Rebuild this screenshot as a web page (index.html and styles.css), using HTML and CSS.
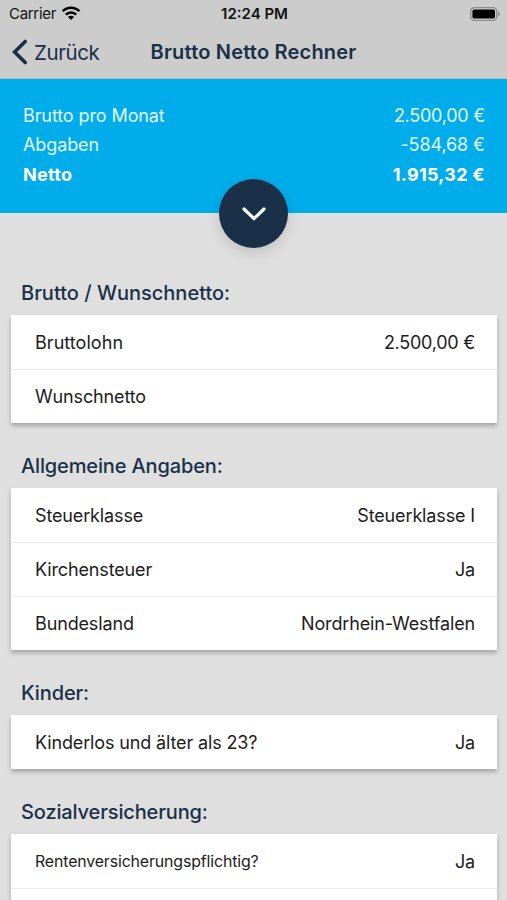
FILE: index.html
```
<!DOCTYPE html>
<html lang="de">
<head>
<meta charset="UTF-8">
<meta name="viewport" content="width=device-width, initial-scale=1">
<title>Brutto Netto Rechner</title>
<link rel="stylesheet" href="styles.css">
</head>
<body>
<header class="header">
  <div class="status">
    <div class="carrier">
      <span>Carrier</span>
      <svg class="wifi" width="20" height="14" viewBox="0 0 20 14" fill="none" stroke="#000" stroke-width="2.6">
        <path d="M1.6 5.2C6.3 .5 13.7 .5 18.4 5.2"/>
        <path d="M4.8 8.7C7.7 5.8 12.3 5.8 15.2 8.7"/>
        <path d="M6.9 10.9C8.6 9.3 11.4 9.3 13.1 10.9L10 14z" fill="#000" stroke="none"/>
      </svg>
    </div>
    <span class="time">12:24 PM</span>
    <svg class="battery" width="30" height="14" viewBox="0 0 30 14">
      <rect x=".7" y=".7" width="26" height="12.6" rx="3.6" fill="none" stroke="#8d8d8d" stroke-width="1.3"/>
      <rect x="2.4" y="2.4" width="22.6" height="9.2" rx="1.8" fill="#000"/>
      <path d="M28 4.6c2.2.8 2.2 4 0 4.8z" fill="#8d8d8d"/>
    </svg>
  </div>
  <nav class="nav">
    <a class="back">
      <svg width="16" height="26" viewBox="0 0 16 26" fill="none" stroke="#1a3049" stroke-width="3.6" stroke-linecap="round"><path d="M13.2 2.4L2.6 13L13.2 23.6"/></svg>
      <span>Zurück</span>
    </a>
    <h1 class="title">Brutto Netto Rechner</h1>
  </nav>
</header>

<section class="summary">
  <div class="line"><span>Brutto pro Monat</span><span class="value">2.500,00 €</span></div>
  <div class="line"><span>Abgaben</span><span>-584,68 €</span></div>
  <div class="line netto"><span>Netto</span><span>1.915,32 €</span></div>
  <button class="toggle" aria-label="Details">
    <svg width="26" height="16" viewBox="0 0 26 16" fill="none" stroke="#fff" stroke-width="3.2" stroke-linecap="round" stroke-linejoin="round"><path d="M3 3L13 12.7L23 3"/></svg>
  </button>
</section>

<main class="form">
  <h2 class="group first">Brutto / Wunschnetto:</h2>
  <div class="card">
    <div class="row"><span class="wide">Bruttolohn</span><span class="value">2.500,00 €</span></div>
    <div class="row"><span>Wunschnetto</span></div>
  </div>

  <h2 class="group">Allgemeine Angaben:</h2>
  <div class="card">
    <div class="row"><span>Steuerklasse</span><span>Steuerklasse I</span></div>
    <div class="row"><span>Kirchensteuer</span><span>Ja</span></div>
    <div class="row"><span>Bundesland</span><span>Nordrhein-Westfalen</span></div>
  </div>

  <h2 class="group">Kinder:</h2>
  <div class="card">
    <div class="row"><span>Kinderlos und älter als 23?</span><span>Ja</span></div>
  </div>

  <h2 class="group">Sozialversicherung:</h2>
  <div class="card">
    <div class="row"><span class="small">Rentenversicherungspflichtig?</span><span>Ja</span></div>
    <div class="row"></div>
  </div>
</main>
</body>
</html>
```
FILE: styles.css
```
*{box-sizing:border-box;}

body{
  margin:0;
  height:900px;
  overflow:hidden;
  background:#dfdfdf;
  color:#1c1c1c;
  font-family:Inter,"Liberation Sans",sans-serif;
  font-size:18px;
}

/* status bar + navigation */
.header{height:79px;background:#ccc;border-bottom:1px solid #b4bcc0;}
.status{display:grid;grid-template-columns:1fr auto 1fr;align-items:center;height:27px;padding:0 7px 0 9px;color:#111;font-size:15px;}
.carrier{display:flex;align-items:center;gap:5px;letter-spacing:-.3px;}
.wifi{margin-bottom:1px;}
.time{font-weight:600;}
.battery{justify-self:end;}
.nav{display:grid;grid-template-columns:1fr auto 1fr;align-items:center;height:50px;padding:0 12px;color:#1a3049;}
.back{display:flex;align-items:center;gap:6px;font-size:20.5px;letter-spacing:-.4px;}
.title{margin:0;font-size:20px;font-weight:600;letter-spacing:.2px;}

.summary{position:relative;height:134px;padding:22px 22px 0 23px;background:#00adea;color:#e2faff;}
.line{display:flex;justify-content:space-between;height:29.3px;line-height:30px;letter-spacing:-.1px;}
.value{letter-spacing:-.25px;}
.netto{color:#fff;font-weight:700;letter-spacing:.3px;}
.toggle{
  position:absolute;left:50%;bottom:-35px;
  display:flex;align-items:center;justify-content:center;
  width:69px;height:69px;margin-left:-34.5px;padding:0;
  border:0;border-radius:50%;
  background:#1a3049;
  box-shadow:0 5px 14px rgba(0,0,0,.13);
}

.form{padding:37px 10px 0 11px;}
.group{height:65px;margin:0;padding:30px 10px 0;color:#1a3049;font-size:20px;font-weight:500;line-height:26px;letter-spacing:-.14px;}
.first{letter-spacing:0;}
.card{background:#fff;box-shadow:0 3px 4px rgba(0,0,0,.25);}
.row{display:flex;align-items:center;justify-content:space-between;height:54px;padding:0 22px 0 24px;letter-spacing:-.14px;}
.row + .row{border-top:1px solid #ececec;}
.wide{letter-spacing:.05px;}
.small{font-size:15.9px;}
```
